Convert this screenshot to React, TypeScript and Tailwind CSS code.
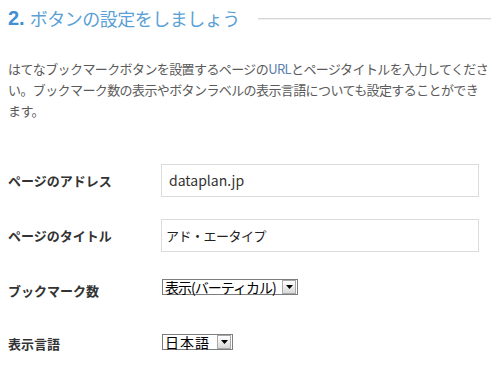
import React from "react";

const jp = { fontFamily: '"Noto Sans CJK JP", "Noto Sans", sans-serif' };

function Arrow() {
  return (
    <div className="w-[14px] h-[14px] mr-[1px] shrink-0 border border-[#a9a9a9] bg-gradient-to-b from-white to-[#d9d9d9] flex items-center justify-center">
      <svg width="7" height="4" viewBox="0 0 7 4">
        <path d="M0 0 H7 L3.5 4 Z" fill="#000" />
      </svg>
    </div>
  );
}

function FakeSelect({ text, width, tight }: { text: string; width: string; tight?: boolean }) {
  return (
    <div className={`${width} h-[16px] border border-[#7d7d7d] bg-white flex items-center justify-between`}>
      <span
        className={
          tight
            ? "pl-[2px] text-[14px] leading-[14px] tracking-[-1px] text-black whitespace-nowrap"
            : "pl-[2px] text-[14px] leading-[14px] tracking-[1px] text-black whitespace-nowrap"
        }
      >
        {text}
      </span>
      <Arrow />
    </div>
  );
}

export default function App() {
  return (
    <div className="w-[499px] h-[372px] bg-white pl-[8px] overflow-hidden" style={jp}>
      <div className="h-[36px] flex items-center">
        <span className="text-[20px] font-bold text-[#3f8fd2] leading-none" style={{ fontFamily: '"Liberation Sans", Arial, sans-serif' }}>2.</span>
        <span className="ml-[5px] text-[18px] tracking-[-0.5px] text-[#5a9fd6] leading-none whitespace-nowrap">ボタンの設定をしましょう</span>
        <div className="flex-1 ml-[18px] mr-[8px] h-[1px] bg-[#d6d6d6] shadow-[0_1px_0_#f0f0f0]" />
      </div>
      <p className="mt-[22px] text-[13px] leading-[21px] tracking-[-0.6px] text-[#5a5a5a] whitespace-nowrap">
        はてなブックマークボタンを設置するページの<span className="text-[#5b7fae]">URL</span>とページタイトルを入力してくださ
        <br />
        い。ブックマーク数の表示やボタンラベルの表示言語についても設定することができ
        <br />
        ます。
      </p>
      <div className="mt-[43px] flex flex-col gap-[22px]">
        <div className="h-[33px] flex items-center">
          <div className="w-[153px] text-[13px] font-bold text-[#333]">ページのアドレス</div>
          <div className="w-[318px] h-[33px] border border-[#dcdcdc] flex items-center pl-[7px] text-[14px] text-[#333]">dataplan.jp</div>
        </div>
        <div className="h-[33px] flex items-center">
          <div className="w-[153px] text-[13px] font-bold text-[#333]">ページのタイトル</div>
          <div className="w-[318px] h-[33px] border border-[#dcdcdc] flex items-center pl-[4px] text-[13px] tracking-[-0.5px] text-[#222]">アド・エータイプ</div>
        </div>
        <div className="h-[33px] flex items-center">
          <div className="w-[154px] text-[13px] font-bold text-[#333]">ブックマーク数</div>
          <div className="self-start mt-[5px]">
            <FakeSelect text="表示(バーティカル)" width="w-[136px]" tight />
          </div>
        </div>
        <div className="h-[33px] flex items-center">
          <div className="w-[154px] text-[13px] font-bold text-[#333] -mt-[3px]">表示言語</div>
          <div className="self-start mt-[5px]">
            <FakeSelect text="日本語" width="w-[71px]" />
          </div>
        </div>
      </div>
    </div>
  );
}
